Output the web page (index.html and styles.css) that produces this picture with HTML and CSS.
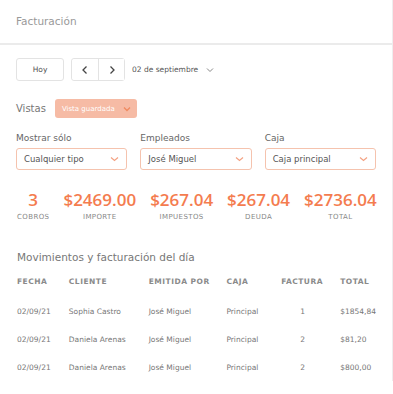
FILE: index.html
```html
<!DOCTYPE html>
<html>
	<head>
		<title>Facturación</title>
		<link rel="stylesheet" href="styles.css">
	</head>
	<body>
		<div class="page">
			<div class="header">Facturación</div>
			<div class="content">
				<div class="date-row">
					<button class="btn today">Hoy</button>
					<div class="nav">
						<button class="btn nav-btn"><svg width="10" height="10" viewBox="0 0 10 10"><path d="M6.5 1.5L3 5l3.5 3.5" fill="none" stroke="#444" stroke-width="1.3"/></svg></button>
						<button class="btn nav-btn"><svg width="10" height="10" viewBox="0 0 10 10"><path d="M3.5 1.5L7 5 3.5 8.5" fill="none" stroke="#444" stroke-width="1.3"/></svg></button>
					</div>
					<div class="date">02 de septiembre <svg class="chev" width="8" height="6" viewBox="0 0 8 6"><path d="M1 1.5l3 3 3-3" fill="none" stroke="#888" stroke-width="1"/></svg></div>
				</div>

				<div class="views">
					<span class="views-label">Vistas</span>
					<button class="saved">Vista guardada <svg width="8" height="6" viewBox="0 0 8 6"><path d="M1 1.5l3 3 3-3" fill="none" stroke="#f08a60" stroke-width="1.3"/></svg></button>
				</div>

				<div class="filters">
					<div class="filter">
						<div class="filter-label">Mostrar sólo</div>
						<div class="select">Cualquier tipo <svg width="9" height="6" viewBox="0 0 9 6"><path d="M1 1.5l3.5 3 3.5-3" fill="none" stroke="#f3a283" stroke-width="1.2"/></svg></div>
					</div>
					<div class="filter">
						<div class="filter-label">Empleados</div>
						<div class="select">José Miguel <svg width="9" height="6" viewBox="0 0 9 6"><path d="M1 1.5l3.5 3 3.5-3" fill="none" stroke="#f3a283" stroke-width="1.2"/></svg></div>
					</div>
					<div class="filter">
						<div class="filter-label">Caja</div>
						<div class="select">Caja principal <svg width="9" height="6" viewBox="0 0 9 6"><path d="M1 1.5l3.5 3 3.5-3" fill="none" stroke="#f3a283" stroke-width="1.2"/></svg></div>
					</div>
				</div>

				<div class="stats">
					<div class="stat"><div class="stat-value">3</div><div class="stat-label">COBROS</div></div>
					<div class="stat"><div class="stat-value">$2469.00</div><div class="stat-label">IMPORTE</div></div>
					<div class="stat"><div class="stat-value">$267.04</div><div class="stat-label">IMPUESTOS</div></div>
					<div class="stat"><div class="stat-value">$267.04</div><div class="stat-label">DEUDA</div></div>
					<div class="stat"><div class="stat-value">$2736.04</div><div class="stat-label">TOTAL</div></div>
				</div>

				<div class="section-title">Movimientos y facturación del día</div>

				<table class="moves">
					<thead>
						<tr><th>FECHA</th><th>CLIENTE</th><th>EMITIDA POR</th><th>CAJA</th><th>FACTURA</th><th>TOTAL</th></tr>
					</thead>
					<tbody>
						<tr><td>02/09/21</td><td>Sophia Castro</td><td>José Miguel</td><td>Principal</td><td>1</td><td>$1854,84</td></tr>
						<tr><td>02/09/21</td><td>Daniela Arenas</td><td>José Miguel</td><td>Principal</td><td>2</td><td>$81,20</td></tr>
						<tr><td>02/09/21</td><td>Daniela Arenas</td><td>José Miguel</td><td>Principal</td><td>2</td><td>$800,00</td></tr>
					</tbody>
				</table>
			</div>
		</div>
	</body>
</html>
```

FILE: styles.css
```css
html, body {
	margin: 0;
	background: #fff;
}
body {
	font-family: "DejaVu Sans", sans-serif;
	color: #666;
}

.page {
	width: 393px;
	border-right: 1px solid #eee;
	box-sizing: border-box;
}

.header {
	height: 45px;
	box-sizing: border-box;
	padding: 15px 16px 0;
	font-size: 10.5px;
	color: #999;
	border-bottom: 2px solid #ebebeb;
}

.content {
	padding: 13px 16px 0 16px;
}

.btn {
	background: #fff;
	border: 1px solid #e3e3e3;
	border-radius: 3px;
	font-family: inherit;
	padding: 0;
	color: #555;
}

.date-row {
	display: flex;
	align-items: center;
	height: 23px;
}
.today {
	width: 48px;
	height: 23px;
	font-size: 7.5px;
}
.nav {
	display: flex;
	margin-left: 7px;
	border: 1px solid #e3e3e3;
	border-radius: 3px;
}
.nav-btn {
	width: 26px;
	height: 21px;
	border: none;
	display: flex;
	align-items: center;
	justify-content: center;
}
.nav-btn + .nav-btn {
	border-left: 1px solid #e3e3e3;
	border-radius: 0;
}
.date {
	margin-left: 7px;
	font-size: 7.5px;
	color: #555;
	display: flex;
	align-items: center;
}
.chev {
	margin-left: 8px;
}

.views {
	display: flex;
	align-items: center;
	margin-top: 18px;
}
.views-label {
	font-size: 10px;
	color: #777;
}
.saved {
	margin-left: 9px;
	height: 19px;
	padding: 0 6px 0 7px;
	border: none;
	border-radius: 3px;
	background: #f6bba5;
	color: #fff;
	font-family: inherit;
	font-size: 7px;
	display: flex;
	align-items: center;
	gap: 8px;
}

.filters {
	display: flex;
	gap: 13px;
	margin-top: 15px;
}
.filter {
	width: 112px;
}
.filter-label {
	font-size: 9px;
	color: #666;
	margin-bottom: 5px;
}
.select {
	height: 22px;
	box-sizing: border-box;
	border: 1px solid #f5c3ae;
	border-radius: 3px;
	padding: 0 7px;
	font-size: 8.5px;
	color: #555;
	display: flex;
	align-items: center;
	justify-content: space-between;
}

.stats {
	display: flex;
	gap: 14px;
	margin-top: 20px;
	padding-left: 1px;
}
.stat {
	text-align: center;
}
.stat-value {
	font-family: "Open Sans", sans-serif;
	font-size: 17px;
	font-weight: 600;
	color: #f47c4f;
	line-height: 20px;
}
.stat-label {
	font-size: 7px;
	color: #888;
	margin-top: 3px;
	letter-spacing: 0.4px;
}

.section-title {
	margin-top: 30px;
	font-size: 10.5px;
	color: #777;
	padding-left: 1px;
}

.moves {
	border-collapse: collapse;
	margin-top: 10px;
	font-size: 7.5px;
	color: #777;
}
.moves th {
	text-align: left;
	font-weight: bold;
	font-size: 7.5px;
	letter-spacing: 0.5px;
	color: #8a8a8a;
	height: 16px;
	padding: 0 0 8px 0;
	vertical-align: middle;
}
.moves td {
	height: 28px;
	padding: 0;
	white-space: nowrap;
}
.moves th:nth-child(1), .moves td:nth-child(1) { width: 52px; padding-left: 1px; }
.moves th:nth-child(2), .moves td:nth-child(2) { width: 80px; }
.moves th:nth-child(3), .moves td:nth-child(3) { width: 78px; }
.moves th:nth-child(4), .moves td:nth-child(4) { width: 55px; }
.moves th:nth-child(5), .moves td:nth-child(5) { width: 43px; padding-right: 16px; }
.moves td:nth-child(5) { text-align: center; }
```
